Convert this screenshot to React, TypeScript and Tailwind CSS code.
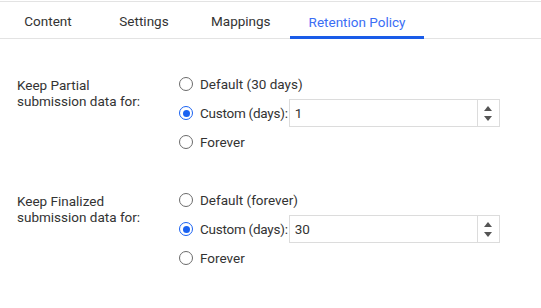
import React from 'react';

const tabs = ['Content', 'Settings', 'Mappings', 'Retention Policy'];

const Radio = ({ checked, label, tight }: { checked?: boolean; label: string; tight?: boolean }) => (
  <span className="flex items-center">
    <span
      className={
        checked
          ? 'w-[14px] h-[14px] rounded-full border-[1.5px] border-[#1a62f2] flex items-center justify-center'
          : 'w-[14px] h-[14px] rounded-full border-[1.5px] border-[#6b6b6b]'
      }
    >
      {checked && <span className="w-[7px] h-[7px] rounded-full bg-[#1a62f2]" />}
    </span>
    <span className={tight ? 'ml-[7px] tracking-[-0.25px]' : 'ml-[7px]'}>{label}</span>
  </span>
);

const NumberBox = ({ value }: { value: string }) => (
  <div className="ml-[1px] w-[211px] h-[28px] border border-[#dcdcdc] bg-white flex">
    <div className="flex-1 pl-[5px] flex items-center text-[#333]">{value}</div>
    <div className="w-[22px] border-l border-[#dcdcdc] flex flex-col items-center justify-center gap-[5px]">
      <svg width="8" height="5" viewBox="0 0 8 5"><path d="M4 0L8 5H0z" fill="#555" /></svg>
      <svg width="8" height="5" viewBox="0 0 8 5"><path d="M0 0H8L4 5z" fill="#555" /></svg>
    </div>
  </div>
);

const Section = ({ title, def, value }: { title: string; def: string; value: string }) => (
  <div className="flex">
    <div className="w-[179px] pl-[17px] leading-[16px] pt-[1px]">
      <div>{title}</div>
      <div>submission data for:</div>
    </div>
    <div className="flex flex-col">
      <div className="h-[16px] flex items-center">
        <Radio label={def} />
      </div>
      <div className="mt-[7px] flex items-center h-[28px]">
        <Radio checked tight label="Custom (days):" />
        <NumberBox value={value} />
      </div>
      <div className="mt-[7px] h-[16px] flex items-center">
        <Radio label="Forever" />
      </div>
    </div>
  </div>
);

export default function App() {
  return (
    <div className="w-[541px] h-[308px] bg-white text-[13.5px] text-[#333] font-['Roboto',sans-serif]">
      <div className="border-t border-[#e3e3e3] mt-[1px] border-b flex h-[38px]">
        {tabs.map((t, i) => (
          <div
            key={t}
            className={
              i === 3
                ? 'min-w-[96px] px-[19px] flex items-center justify-center text-[#3b6ef5] border-b-[3px] border-[#1a5ce8] pt-[7px] -mb-[1px]'
                : 'min-w-[96px] px-[19px] flex items-center justify-center text-[#333] pt-[3px]'
            }
          >
            {t}
          </div>
        ))}
      </div>
      <div className="pt-[37px]">
        <Section title="Keep Partial" def="Default (30 days)" value="1" />
        <div className="h-[42px]" />
        <Section title="Keep Finalized" def="Default (forever)" value="30" />
      </div>
    </div>
  );
}
